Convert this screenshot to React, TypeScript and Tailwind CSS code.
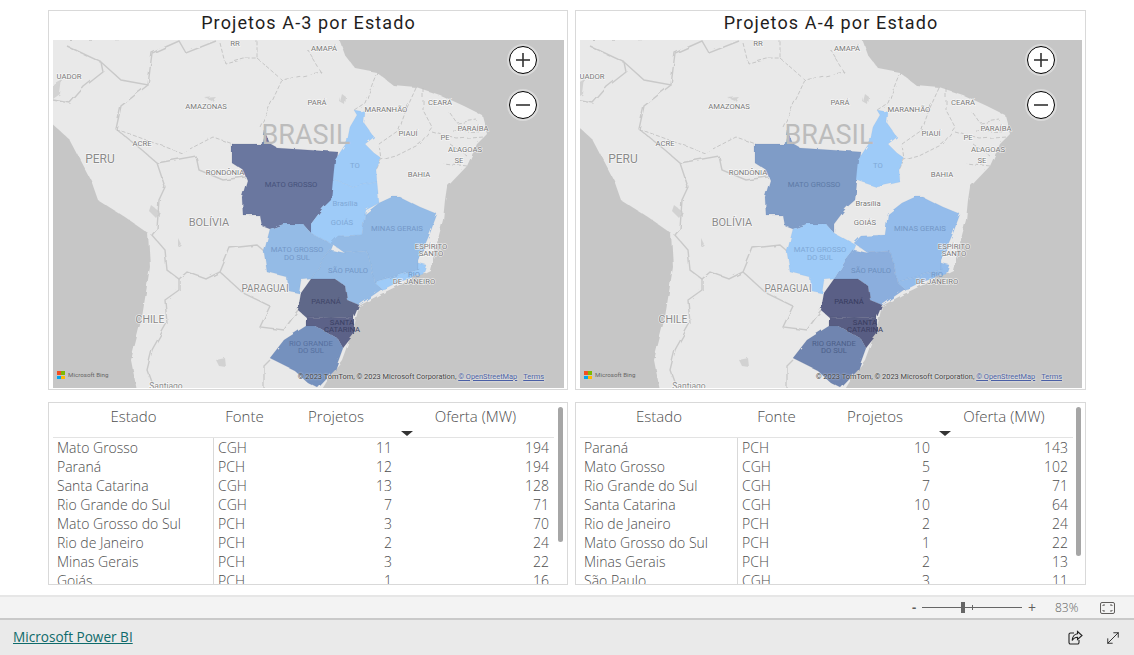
import { MoveDiagonal } from "lucide-react";

type Row = [string, string, number, number];

const rowsA3: Row[] = [
  ["Mato Grosso", "CGH", 11, 194],
  ["Paraná", "PCH", 12, 194],
  ["Santa Catarina", "CGH", 13, 128],
  ["Rio Grande do Sul", "CGH", 7, 71],
  ["Mato Grosso do Sul", "PCH", 3, 70],
  ["Rio de Janeiro", "PCH", 2, 24],
  ["Minas Gerais", "PCH", 3, 22],
  ["Goiás", "PCH", 1, 16],
];

const rowsA4: Row[] = [
  ["Paraná", "PCH", 10, 143],
  ["Mato Grosso", "CGH", 5, 102],
  ["Rio Grande do Sul", "CGH", 7, 71],
  ["Santa Catarina", "CGH", 10, 64],
  ["Rio de Janeiro", "PCH", 2, 24],
  ["Mato Grosso do Sul", "PCH", 1, 22],
  ["Minas Gerais", "PCH", 2, 13],
  ["São Paulo", "CGH", 3, 11],
];

const shapes: Record<string, string> = {
  MT: "232,144 262,144 264,130 270,144 277,148 338,152 335,173 332,200 323,208 311,224 311,233 303,224 284,224 270,229 262,226 260,215 243,215 242,197 247,180 243,170 232,163",
  TO: "354,110 365,112 364,123 374,137 365,144 374,153 381,158 376,170 377,182 354,187 333,180 335,160 347,142 350,127 357,115",
  GO: "333,180 354,187 377,182 379,203 366,210 365,214 362,235 338,236 333,245 311,233 311,224 323,208 331,200",
  MG: "379,203 392,197 400,197 420,207 437,214 430,233 424,247 418,260 418,270 393,277 374,282 372,270 367,251 345,253 331,243 338,236 362,235 365,214",
  SP: "331,250 345,253 367,251 372,270 374,282 382,289 359,305 347,300 345,286 335,279 311,279 321,263",
  RJ: "418,263 426,265 423,274 396,283 386,288 382,289 374,282 393,277 418,270",
  MS: "270,229 284,224 303,224 311,233 333,245 331,250 321,263 311,279 301,280 299,293 289,291 287,277 267,272 264,252",
  PR: "311,279 335,279 345,286 347,300 359,305 354,317 331,318 306,317 298,310 301,293",
  SC: "306,317 331,318 354,317 354,334 343,348 338,339 315,326 306,326",
  RS: "306,326 315,326 338,339 343,348 335,370 318,388 308,383 294,370 270,358 284,340",
};

const borders = [
  "67,46 101,62 121,80 148,85 152,53 179,41 186,53 216,41",
  "101,62 103,72 84,87 70,103 53,100",
  "148,85 121,106 116,129 142,150 157,163 165,187 159,200 157,229 152,235 165,250 167,270 179,279 187,272 206,279 220,272 230,248 257,245 265,252",
  "157,163 196,156 199,170 223,180 245,177",
  "220,272 243,293 270,306 260,327 284,330 298,310",
  "179,279 179,290 165,300 167,323 152,350 147,370 155,392",
  "270,360 264,366 264,392",
];

const stateLines = [
  "220,43 225,63 243,58 257,58 257,40",
  "257,58 282,80 321,72 308,50",
  "282,80 260,127",
  "377,72 365,103 354,110",
  "416,88 406,110 399,130 379,144 381,160",
  "423,88 423,110 432,127 420,144 396,156 381,160",
  "450,113 457,123 477,120",
  "432,132 457,139 484,137",
  "452,130 481,132",
  "450,144 467,156",
  "467,166 443,163",
  "116,129 182,153 213,137 233,144",
  "381,160 376,170",
];

// label: text, x, y, state key (coloured polygons get a plain label)
const labels: [string, number, number, string?][] = [
  ["RR", 235, 43],
  ["AMAPÁ", 324, 48],
  ["UADOR", 69, 76],
  ["AMAZONAS", 206, 106],
  ["PARÁ", 317, 102],
  ["MARANHÃO", 386, 109],
  ["CEARÁ", 440, 102],
  ["PIAUÍ", 408, 133],
  ["PARAÍBA", 473, 128],
  ["PE", 445, 137],
  ["ALAGOAS", 465, 149],
  ["SE", 459, 160],
  ["BAHIA", 419, 174],
  ["ACRE", 142, 143],
  ["RONDÔNIA", 225, 172],
  ["MATO GROSSO", 291, 184, "MT"],
  ["TO", 355, 165, "TO"],
  ["Brasília", 345, 203, "GO"],
  ["GOIÁS", 342, 222, "GO"],
  ["MINAS GERAIS", 397, 228, "MG"],
  ["ESPÍRITO", 431, 246],
  ["SANTO", 431, 253],
  ["MATO GROSSO", 297, 249, "MS"],
  ["DO SUL", 297, 257, "MS"],
  ["SÃO PAULO", 348, 270, "SP"],
  ["RIO", 414, 274, "RJ"],
  ["DE JANEIRO", 414, 281],
  ["PARANÁ", 326, 301, "PR"],
  ["SANTA", 342, 322, "SC"],
  ["CATARINA", 342, 329, "SC"],
  ["RIO GRANDE", 311, 343, "RS"],
  ["DO SUL", 311, 350, "RS"],
];

const bigLabels: [string, number, number, number][] = [
  ["PERU", 100, 159, 12],
  ["BOLÍVIA", 209, 222, 11],
  ["PARAGUAI", 265, 288, 10],
  ["CHILE", 150, 319, 10.5],
  ["Santiago", 166, 386, 8.5],
];

const fillsA3: Record<string, [string, string]> = {
  MT: ["#6a779f", "#46527b"],
  TO: ["#9ecbf8", "#7ea8d6"],
  GO: ["#9ecbf8", "#7ea8d6"],
  MG: ["#94bbe6", "#7397c6"],
  SP: ["#94bbe6", "#7397c6"],
  RJ: ["#9ecbf8", "#7397c6"],
  MS: ["#94bbe6", "#7397c6"],
  PR: ["#5f6789", "#3f4668"],
  SC: ["#5c6288", "#3a3f63"],
  RS: ["#7591be", "#55709e"],
};

const fillsA4: Record<string, [string, string]> = {
  MT: ["#7f9cc7", "#5d7aa6"],
  TO: ["#9ecbf8", "#7ea8d6"],
  MG: ["#94bceb", "#7397c6"],
  SP: ["#8baedd", "#6c8fbd"],
  RJ: ["#94bceb", "#7397c6"],
  MS: ["#9ecbf8", "#7ea8d6"],
  PR: ["#5a5f86", "#383c60"],
  SC: ["#595d83", "#383c60"],
  RS: ["#6f85b0", "#4c5f89"],
};

function BrazilMap({ id, fills, viewBox }: { id: string; fills: Record<string, [string, string]>; viewBox: string }) {
  return (
    <svg viewBox={viewBox} className="block h-full w-full" fontFamily="Roboto, sans-serif">
      <defs>
        {/* roughens the straight polygon edges so they read as real borders */}
        <filter id={id} x="-5%" y="-5%" width="110%" height="110%">
          <feTurbulence type="fractalNoise" baseFrequency="0.09" numOctaves="2" seed="4" />
          <feDisplacementMap in="SourceGraphic" scale="4" />
        </filter>
      </defs>
      <rect x="0" y="0" width="700" height="500" fill="#c6c6c6" />
      <g filter={`url(#${id})`}>
        <polygon
          fill="#e9e9e9"
          points="70,40 338,36 345,55 355,68 376,72 393,85 416,87 440,95 464,106 482,115 487,134 477,144 467,166 447,187 445,200 443,220 437,243 430,270 379,295 359,306 354,327 342,360 332,373 318,396 138,396 131,360 142,317 150,267 148,233 125,217 98,200 91,180 70,140 48,120 48,40"
        />
        <g fill="#d2d2d2">
          <polygon points="53,84 62,79 60,94 53,99" />
          <polygon points="342,94 346,97 345,105 340,102" />
          <polygon points="152,206 160,212 156,218 150,212" />
          <polygon points="178,238 181,244 178,247" />
          <polygon points="216,360 225,358 226,367 219,366" />
          <polygon points="205,98 216,97 212,101" />
        </g>
        <g fill="none" stroke="#c9c9c9" strokeWidth="1.4">
          {borders.map((b) => (
            <polyline key={b} points={b} />
          ))}
        </g>
        <g fill="none" stroke="#bcbcbc" strokeWidth="0.8" strokeDasharray="4 2">
          {stateLines.map((b) => (
            <polyline key={b} points={b} />
          ))}
        </g>
        {Object.keys(fills).map((k) => (
          <polygon key={k} points={shapes[k]} fill={fills[k][0]} stroke={fills[k][1]} strokeOpacity="0.25" strokeWidth="0.5" />
        ))}
      </g>
      <text x="306" y="135" fontSize="27" textAnchor="middle" dominantBaseline="central" fill="#bcbcbc">
        BRASIL
      </text>
      {labels.map(([t, x, y, k]) => {
        const colored = k && fills[k];
        return (
          <text
            key={t + x}
            x={x}
            y={y}
            fontSize="7.7"
            textAnchor="middle"
            dominantBaseline="central"
            fill={colored ? fills[k][1] : "#767676"}
            stroke={colored ? "none" : "#ffffff"}
            strokeWidth="1.2"
            strokeOpacity="0.8"
            paintOrder="stroke"
          >
            {t}
          </text>
        );
      })}
      {bigLabels.map(([t, x, y, s]) => (
        <text
          key={t}
          x={x}
          y={y}
          fontSize={s}
          textAnchor="middle"
          dominantBaseline="central"
          fill="#8a8a8a"
          stroke="#ffffff"
          strokeWidth="1.2"
          strokeOpacity="0.8"
          paintOrder="stroke"
        >
          {t}
        </text>
      ))}
    </svg>
  );
}

function ZoomButton({ minus }: { minus?: boolean }) {
  return (
    <button
      type="button"
      className="flex h-[28px] w-[28px] items-center justify-center rounded-full border-[1.5px] border-black bg-white shadow-[0_0_0_2px_rgba(255,255,255,0.35)]"
    >
      <svg width="18" height="18" viewBox="0 0 18 18" fill="none" stroke="#333" strokeWidth="1.6">
        <path d="M2 9h14" />
        {!minus && <path d="M9 2v14" />}
      </svg>
    </button>
  );
}

function MapCard({
  id,
  title,
  fills,
  viewBox,
  className,
}: {
  id: string;
  title: string;
  fills: Record<string, [string, string]>;
  viewBox: string;
  className: string;
}) {
  return (
    <section className={`flex h-[380px] flex-col border border-[#d9d9d9] bg-white pb-px pl-[4px] pr-[3px] ${className}`}>
      <h2 className="h-[29px] text-center font-['Roboto',sans-serif] text-[18px] leading-[24px] tracking-[1.12px] text-[#1f1e1d]">
        {title}
      </h2>
      <div className="relative min-h-0 flex-1 overflow-hidden">
        <BrazilMap id={id} fills={fills} viewBox={viewBox} />
        <div className="absolute right-[27px] top-[6px] flex flex-col gap-[17px]">
          <ZoomButton />
          <ZoomButton minus />
        </div>
        <div className="absolute bottom-[8px] left-[4px] flex items-center gap-[3px] font-['Roboto',sans-serif] text-[6.2px] text-[#666]">
          <span className="grid h-[8px] w-[8px] grid-cols-2 gap-[0.5px]">
            <i className="bg-[#f25022]" />
            <i className="bg-[#7fba00]" />
            <i className="bg-[#00a4ef]" />
            <i className="bg-[#ffb900]" />
          </span>
          Microsoft Bing
        </div>
        <div className="absolute bottom-[6px] right-[20px] whitespace-nowrap font-['Roboto',sans-serif] text-[7.4px] text-[#444] [text-shadow:0_0_2px_#fff]">
          © 2023 TomTom, © 2023 Microsoft Corporation, <span className="text-[#4a5fa5] underline">© OpenStreetMap</span>
          <span className="ml-[6px] text-[#4a5fa5] underline">Terms</span>
        </div>
      </div>
    </section>
  );
}

function DataTable({
  rows,
  cols,
  scrollH,
  className,
}: {
  rows: Row[];
  cols: string;
  scrollH: string;
  className: string;
}) {
  return (
    <section
      className={`relative h-[183px] overflow-hidden border border-[#d9d9d9] bg-white pl-[4px] font-['Open_Sans',sans-serif] font-light text-[#4d4d4d] ${className}`}
    >
      <div className={`grid h-[35px] border-b border-[#e3e3e3] text-center text-[15px] leading-[27px] ${cols}`}>
        <span>Estado</span>
        <span>Fonte</span>
        <span className="relative">
          Projetos
          <span className="absolute bottom-[1px] right-[-16px] h-0 w-0 border-x-[6px] border-t-[5px] border-x-transparent border-t-[#333]" />
        </span>
        <span>Oferta (MW)</span>
      </div>
      {rows.map((r) => (
        <div key={r[0]} className={`grid h-[19px] text-[14px] leading-[19px] ${cols}`}>
          <span className="whitespace-nowrap border-r border-[#d9d9d9] px-[4px]">{r[0]}</span>
          <span className="px-[4px]">{r[1]}</span>
          <span className="px-[5px] text-right">{r[2]}</span>
          <span className="px-[5px] text-right">{r[3]}</span>
        </div>
      ))}
      <div className={`absolute right-[4px] top-[4px] w-[5px] rounded-full bg-[#a6a6a6] ${scrollH}`} />
    </section>
  );
}

export default function App() {
  return (
    <div className="flex h-[655px] w-[1134px] flex-col overflow-hidden bg-white">
      <main className="flex h-[595px] flex-col gap-[12px] pl-[48px] pt-[10px]">
        <div className="flex gap-[7px]">
          <MapCard id="rough-a3" title="Projetos A-3 por Estado" fills={fillsA3} viewBox="53 40 511 348" className="w-[520px]" />
          <MapCard id="rough-a4" title="Projetos A-4 por Estado" fills={fillsA4} viewBox="57 40 502 348" className="w-[511px]" />
        </div>
        <div className="flex gap-[7px]">
          <DataTable rows={rowsA3} cols="grid-cols-[161px_61px_122px_157px]" scrollH="h-[135px]" className="w-[520px] pr-[13px]" />
          <DataTable rows={rowsA4} cols="grid-cols-[158px_77px_120px_138px]" scrollH="h-[149px]" className="w-[511px] pr-[12px]" />
        </div>
      </main>
      <div className="flex h-[23px] items-center border-t-2 border-[#e6e6e6] bg-[#f3f3f3] pl-[912px] text-[#605e5c]">
        <span className="w-[10px] font-['Open_Sans',sans-serif] text-[13px] font-bold leading-none">-</span>
        <div className="relative h-px w-[100px] bg-[#666]">
          <span className="absolute left-[39px] top-[-5px] h-[11px] w-[4px] bg-[#666]" />
          <span className="absolute left-[50px] top-[-2px] h-[5px] w-px bg-[#666]" />
        </div>
        <span className="ml-[6px] font-['Open_Sans',sans-serif] text-[14px] leading-none">+</span>
        <span className="ml-[19px] font-['Open_Sans',sans-serif] text-[12px] font-light">83%</span>
        <svg className="ml-[22px]" width="15" height="12" viewBox="0 0 15 12" fill="none" stroke="#605e5c" strokeWidth="1">
          <rect x="0.5" y="0.5" width="14" height="11" rx="1.5" />
          <path d="M3 4V3h2M10 3h2v1M3 8v1h2M10 9h2V8" />
        </svg>
      </div>
      <footer className="flex h-[37px] items-center justify-between border-t-2 border-[#c9c9c9] bg-[#eaeaea] pl-[13px] pr-[12px]">
        <a className="font-['Open_Sans',sans-serif] text-[13.6px] text-[#0f6b6b] underline">Microsoft Power BI</a>
        <div className="flex items-center gap-[21px] text-[#222]">
          <svg width="15" height="15" viewBox="0 0 15 15" fill="none" stroke="currentColor" strokeWidth="1.1">
            <path d="M6 3H2.5A1.5 1.5 0 0 0 1 4.5v8A1.5 1.5 0 0 0 2.5 14h7a1.5 1.5 0 0 0 1.5-1.5V10" />
            <path d="M9.5 1.5 14 5.5 9.5 9.5V7.2C7.5 7.2 5.5 8 4.2 10.5 4.4 7 6.5 4 9.5 3.8Z" />
          </svg>
          <MoveDiagonal size={18} strokeWidth={1.2} />
        </div>
      </footer>
    </div>
  );
}
